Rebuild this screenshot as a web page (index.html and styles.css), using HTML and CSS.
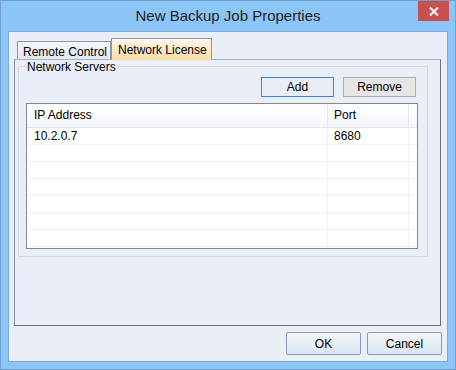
FILE: index.html
```html
<!DOCTYPE html>
<html>
  <head>
    <meta charset="utf-8">
    <title>New Backup Job Properties</title>
    <link rel="stylesheet" href="styles.css">
  </head>
  <body>
    <div class="window">
      <div class="titlebar">
        <span></span>
        <span class="title">New Backup Job Properties</span>
        <span class="close">
          <svg width="10" height="9" viewBox="0 0 10 9">
            <path d="M1 0.5 L9 8.5 M9 0.5 L1 8.5" stroke="#fff" stroke-width="2" fill="none"/>
          </svg>
        </span>
      </div>

      <div class="client">
        <div class="tabs">
          <div class="tabstrip">
            <div class="tab">Remote Control</div>
            <div class="tab active">Network License</div>
          </div>
          <div class="tabpanel">
            <div class="group">
              <div class="legend">Network Servers</div>
              <div class="group-actions">
                <button class="btn focused">Add</button>
                <button class="btn">Remove</button>
              </div>
              <div class="list">
                <div class="row head">
                  <div class="cell ip">IP Address</div>
                  <div class="cell port">Port</div>
                  <div class="cell"></div>
                </div>
                <div class="row">
                  <div class="cell ip">10.2.0.7</div>
                  <div class="cell port">8680</div>
                  <div class="cell"></div>
                </div>
                <div class="row"><div class="cell ip"></div><div class="cell port"></div><div class="cell"></div></div>
                <div class="row"><div class="cell ip"></div><div class="cell port"></div><div class="cell"></div></div>
                <div class="row"><div class="cell ip"></div><div class="cell port"></div><div class="cell"></div></div>
                <div class="row"><div class="cell ip"></div><div class="cell port"></div><div class="cell"></div></div>
                <div class="row"><div class="cell ip"></div><div class="cell port"></div><div class="cell"></div></div>
                <div class="row"><div class="cell ip"></div><div class="cell port"></div><div class="cell"></div></div>
                <div class="row"><div class="cell ip"></div><div class="cell port"></div><div class="cell"></div></div>
              </div>
            </div>
          </div>
        </div>

        <div class="dialog-actions">
          <button class="btn dlg">OK</button>
          <button class="btn dlg">Cancel</button>
        </div>
      </div>
    </div>
  </body>
</html>
```
FILE: styles.css
```css
* {
    font-family: "Liberation Sans", Arial, sans-serif;
    font-size: 12px;
    box-sizing: border-box;
}
body {
    margin: 0;
    background: #8cc6f8;
}
.window {
    width: 456px;
    height: 370px;
    border: 1px solid #6f9ed1;
    background: #8cc6f8;
    display: flex;
    flex-direction: column;
}
.titlebar {
    height: 30px;
    display: grid;
    grid-template-columns: 1fr auto 1fr;
}
.title {
    font-size: 15px;
    line-height: 30px;
    color: #1c1c1c;
}
.close {
    justify-self: end;
    width: 31px;
    height: 20px;
    margin-right: 6px;
    background: #c75050;
    display: flex;
    align-items: center;
    justify-content: center;
}
.client {
    flex: 1;
    margin: 0 7px 7px 7px;
    border: 1px solid #7ea8d4;
    background: #eaeef6;
    padding: 6px 5px 6px 5px;
    display: flex;
    flex-direction: column;
}
.tabs { width: 427px; }
.tabstrip {
    height: 21px;
    padding-left: 3px;
    display: flex;
    align-items: flex-end;
}
.tab {
    width: 94px;
    height: 18px;
    padding: 2px 0 0 5px;
    line-height: 16px;
    border: 1px solid #8a97ad;
    border-bottom: none;
    background: linear-gradient(#f6f7f9, #e3e8ef);
    color: #000;
    white-space: nowrap;
}
.tab.active {
    position: relative;
    z-index: 1;
    width: 101px;
    height: 22px;
    margin-bottom: -1px;
    padding: 3px 0 0 6px;
    border-color: #8795b0;
    background: linear-gradient(#fef8ec, #fbdba4);
}
.tabpanel {
    height: 267px;
    border: 1px solid;
    border-color: #a6b3c6 #6f6f6f #6f6f6f #7d8cab;
    padding: 6px 0 0 3px;
}
.group {
    width: 410px;
    height: 191px;
    border: 1px solid #d5d9df;
    padding: 0 9px 0 7px;
}
.legend {
    width: fit-content;
    margin: -7px 0 0 -1px;
    padding: 0 2px;
    line-height: 14px;
    background: #eaeef6;
}
.group-actions {
    display: flex;
    justify-content: flex-end;
    gap: 9px;
    margin: 3px 2px 0 0;
}
.btn {
    width: 73px;
    height: 20px;
    padding: 0;
    border: 1px solid #adadad;
    background: #e6e6e6;
    color: #000;
}
.btn.focused {
    border-color: #3a82dc;
    background: #e9eef6;
}
.list {
    width: 392px;
    height: 146px;
    margin-top: 6px;
    border: 1px solid #828790;
    background: #fff;
    overflow: hidden;
}
.row {
    display: grid;
    grid-template-columns: 301px 81px 1fr;
    height: 17px;
    line-height: 16px;
    border-bottom: 1px solid #f0f0f0;
}
.row.head {
    height: 24px;
    line-height: 23px;
    border-bottom-color: #e5e5e5;
    background: linear-gradient(#ffffff, #f2f6fb);
}
.cell {
    padding-left: 6px;
    border-right: 1px solid #f0f0f0;
}
.cell.ip { padding-left: 7px; }
.cell:last-child { border-right: none; }
.head .cell { border-right-color: #e5e5e5; }
.dialog-actions {
    display: flex;
    justify-content: flex-end;
    gap: 6px;
    margin-top: 6px;
}
.btn.dlg {
    width: 75px;
    height: 23px;
    border: 1px solid #8e9ab0;
    border-radius: 2px;
    background: linear-gradient(#f4f6f9, #d8e5f3);
}
```
